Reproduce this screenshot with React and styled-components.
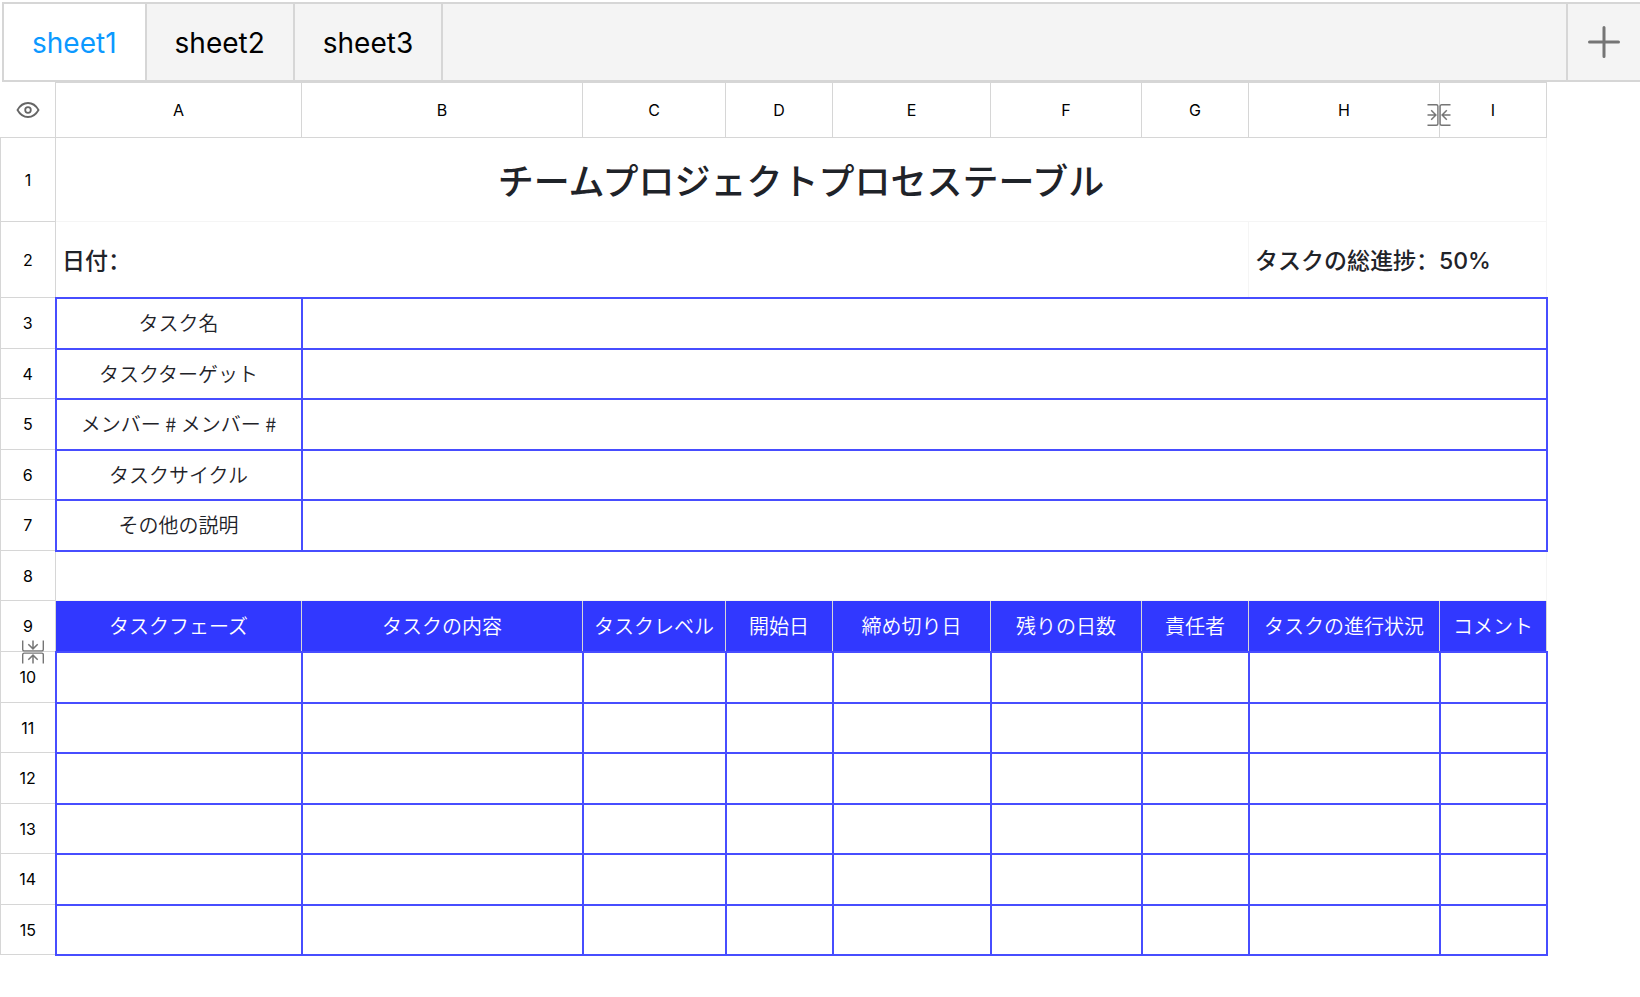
import { useState } from "react";
import styled, { createGlobalStyle, css } from "styled-components";

const SHEETS = ["sheet1", "sheet2", "sheet3"];

const COLUMNS = [
  { name: "A", width: 246 },
  { name: "B", width: 281 },
  { name: "C", width: 143 },
  { name: "D", width: 107 },
  { name: "E", width: 158 },
  { name: "F", width: 151 },
  { name: "G", width: 107 },
  { name: "H", width: 191 },
  { name: "I", width: 107 },
];

const INFO = [
  { row: 3, label: "タスク名", height: 51 },
  { row: 4, label: "タスクターゲット", height: 50 },
  { row: 5, label: "メンバー # メンバー #", height: 51 },
  { row: 6, label: "タスクサイクル", height: 50 },
  { row: 7, label: "その他の説明", height: 51 },
];

const HEADINGS = [
  "タスクフェーズ",
  "タスクの内容",
  "タスクレベル",
  "開始日",
  "締め切り日",
  "残りの日数",
  "責任者",
  "タスクの進行状況",
  "コメント",
];

const TASKS = [
  { row: 10, height: 51 },
  { row: 11, height: 50 },
  { row: 12, height: 51 },
  { row: 13, height: 50 },
  { row: 14, height: 51 },
  { row: 15, height: 50 },
];

function FoldIcon() {
  return (
    <svg width="24" height="22" viewBox="0 0 24 22" fill="none" stroke="#757575" strokeWidth="1.400">
      <path d="M.5 .7h8.900a1.500 1.500 0 0 1 1.500 1.500v17.600a1.500 1.500 0 0 1-1.500 1.500H.5M23.500 .7h-8.900a1.500 1.500 0 0 0-1.500 1.500v17.600a1.500 1.500 0 0 0 1.500 1.500h8.900" />
      <path d="M.5 11h8.300M4.200 6.300l4.700 4.700-4.700 4.700M23.500 11h-8.300M19.800 6.300l-4.700 4.700 4.700 4.700" strokeWidth="1.500" />
    </svg>
  );
}

export default function App() {
  const [active, setActive] = useState("sheet1");

  return (
    <>
      <GlobalStyle />
      <TabBar>
        {SHEETS.map((sheet) => (
          <Tab key={sheet} $active={sheet === active} onClick={() => setActive(sheet)}>
            {sheet}
          </Tab>
        ))}
        <AddButton aria-label="Add sheet">
          <svg width="32" height="32" viewBox="0 0 32 32" stroke="#757575" strokeWidth="3" strokeLinecap="round">
            <path d="M16 1.500v29M1.500 16h29" />
          </svg>
        </AddButton>
      </TabBar>
      <Sheet>
        <colgroup>
          <Col $width={55} />
          {COLUMNS.map((column) => (
            <Col key={column.name} $width={column.width} />
          ))}
        </colgroup>
        <thead>
          <Row $height={55}>
            <Corner>
              <EyeButton aria-label="Show or hide">
                <svg width="24" height="16" viewBox="0 0 24 16" fill="none" stroke="#666" strokeWidth="1.800">
                  <path d="M1.500 8C4 3.500 7.500 1 12 1s8 2.500 10.500 7C20 12.500 16.500 15 12 15S4 12.500 1.500 8z" />
                  <circle cx="12" cy="8" r="2.800" />
                </svg>
              </EyeButton>
            </Corner>
            {COLUMNS.map((column) => (
              <ColumnName key={column.name} scope="col">
                {column.name}
                {column.name === "H" && (
                  <ColumnFold aria-label="Fold column">
                    <FoldIcon />
                  </ColumnFold>
                )}
              </ColumnName>
            ))}
          </Row>
        </thead>
        <tbody>
          <Row $height={84}>
            <RowName scope="row">1</RowName>
            <Title colSpan={9}>チームプロジェクトプロセステーブル</Title>
          </Row>
          <Row $height={76}>
            <RowName scope="row">2</RowName>
            <Summary colSpan={7}>日付：</Summary>
            <Summary colSpan={2}>タスクの総進捗：50%</Summary>
          </Row>
          {INFO.map((info) => (
            <Row key={info.row} $height={info.height}>
              <RowName scope="row">{info.row}</RowName>
              <Cell>{info.label}</Cell>
              <Cell colSpan={8} />
            </Row>
          ))}
          <Row $height={50}>
            <RowName scope="row">8</RowName>
            <Blank colSpan={9} />
          </Row>
          <Row $height={51}>
            <RowName scope="row">
              9
              <RowFold aria-label="Fold row">
                <FoldIcon />
              </RowFold>
            </RowName>
            {HEADINGS.map((heading) => (
              <Heading key={heading}>{heading}</Heading>
            ))}
          </Row>
          {TASKS.map((task) => (
            <Row key={task.row} $height={task.height}>
              <RowName scope="row">{task.row}</RowName>
              {COLUMNS.map((column) => (
                <Cell key={column.name} />
              ))}
            </Row>
          ))}
        </tbody>
      </Sheet>
    </>
  );
}

const GlobalStyle = createGlobalStyle`
  * {
    box-sizing: border-box;
  }
  body {
    margin: 0;
    background-color: #ffffff;
    color: #1f2329;
    font-family: Inter, "Noto Sans CJK JP", sans-serif;
  }
  button {
    font-family: inherit;
    border: none;
    background: none;
    padding: 0;
    cursor: pointer;
  }
  svg {
    display: block;
  }
`;

const TabBar = styled.nav`
  display: flex;
  height: 80px;
  margin: 2px 0 0 2px;
  background-color: #f4f4f4;
  border: 2px solid #d6d6d6;
  border-right: none;
`;

const Tab = styled.button`
  padding: 1px 28px 0;
  border-right: 2px solid #d6d6d6;
  font-size: 28px;
  color: ${(props) => (props.$active ? "#0c99ff" : "#000000")};
  background-color: ${(props) => (props.$active ? "#ffffff" : "transparent")};
`;

const AddButton = styled.button`
  display: flex;
  align-items: center;
  justify-content: center;
  width: 74px;
  margin-left: auto;
  border-left: 2px solid #d6d6d6;
`;

const Sheet = styled.table`
  width: calc(100% - 94px);
  table-layout: fixed;
  border-collapse: collapse;
`;

const Col = styled.col`
  width: ${(props) => props.$width}px;
`;

const Row = styled.tr`
  height: ${(props) => props.$height}px;
`;

const label = css`
  position: relative;
  padding: 0;
  border: 1px solid #d6d6d6;
  color: #000000;
  font-size: 16px;
  font-weight: 400;
  line-height: 20px;
  text-align: center;
`;

const Corner = styled.td`
  padding: 0;
  border-bottom: 1px solid #d6d6d6;
`;

const EyeButton = styled.button`
  display: flex;
  margin: 0 auto;
`;

const ColumnName = styled.th`
  ${label}
`;

const RowName = styled.th`
  ${label}
`;

const ColumnFold = styled.button`
  position: absolute;
  z-index: 1;
  right: -12px;
  bottom: 11px;
`;

const RowFold = styled.button`
  position: absolute;
  z-index: 1;
  left: 20px;
  bottom: -12px;
  transform: rotate(90deg);
`;

const Title = styled.td`
  padding: 4px 0 0;
  border: 1px solid #f5f5f5;
  font-size: 36px;
  font-weight: 500;
  line-height: 44px;
  text-align: center;
`;

const Summary = styled.td`
  padding: 4px 6px 0;
  border: 1px solid #f5f5f5;
  font-family: Inter, "Noto Sans CJK SC", sans-serif;
  font-size: 23px;
  font-weight: 500;
  line-height: 28px;
`;

const Blank = styled.td`
  padding: 0;
  border: 1px solid #f5f5f5;
`;

const text = css`
  padding: 0;
  font-family: "Noto Sans CJK JP", sans-serif;
  font-size: 20px;
  font-weight: 350;
  line-height: 24px;
  text-align: center;
  white-space: nowrap;
`;

const Cell = styled.td`
  ${text}
  border: 2px solid #474dff;
`;

const Heading = styled.td`
  ${text}
  border: 1px solid #d6d6d6;
  background-color: #3138ff;
  color: #ffffff;
`;
